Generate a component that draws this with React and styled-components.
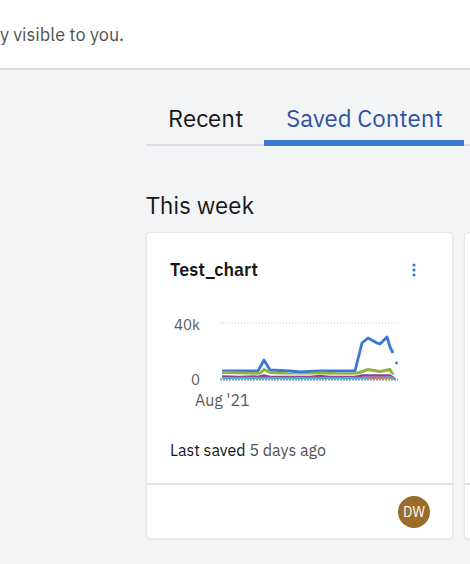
import React from "react";
import styled, { createGlobalStyle } from "styled-components";

const GlobalStyle = createGlobalStyle`
    html, body {
        margin: 0;
        padding: 0;
        background: #f3f4f6;
        font-family: "IBM Plex Sans", Roboto, "Liberation Sans", sans-serif;
        color: #161616;
    }
    * {
        box-sizing: border-box;
    }
`;

const SERIES = [
    { color: "#3b76d9", width: 2.8, points: "2,53 20,53 38,53 44,42 50,52 70,53 80,54 100,53 120,53 135,53 142,25 148,20 157,25 160,26 167,19 170,29 173,35" },
    { color: "#8fb33c", width: 3, points: "2,54.5 40,55.5 44,51.5 50,54.5 80,57 100,55 120,56 135,56 148,51.5 160,53.5 170,51.5 173,57" },
    { color: "#ffffff", width: 1.5, points: "2,57 40,57.5 44,56 50,57 135,57.5 148,56 170,56 174,58.5" },
    { color: "#8e3d9c", width: 2.5, points: "2,58.5 20,59 40,58.5 44,57.5 50,59 90,59 100,58 110,59 135,59 142,57.5 170,57.5 175,61" },
    { color: "#3fb8c9", width: 2, points: "2,60 140,60 160,60 170,59 175,61" },
];

export default function App() {
    return (
        <>
            <GlobalStyle />
            <TopBar>
                <Notice>
                    <NoticeText>Content you save is only visible to you.</NoticeText>
                </Notice>
            </TopBar>

            <Main>
                <TabList>
                    <Tab>Recent</Tab>
                    <Tab active>Saved Content</Tab>
                </TabList>

                <SectionTitle>This week</SectionTitle>

                <CardRow>
                    <Card>
                        <CardBody>
                            <TitleRow>
                                <CardTitle>Test_chart</CardTitle>
                                <MenuButton aria-label="More options">
                                    <svg width="4" height="14" viewBox="0 0 4 14">
                                        <circle cx="2" cy="2" r="1.6" fill="#3b76d9" />
                                        <circle cx="2" cy="7" r="1.6" fill="#3b76d9" />
                                        <circle cx="2" cy="12" r="1.6" fill="#3b76d9" />
                                    </svg>
                                </MenuButton>
                            </TitleRow>

                            <ChartGrid>
                                <YAxis>
                                    <AxisLabel>40k</AxisLabel>
                                    <AxisLabel>0</AxisLabel>
                                </YAxis>
                                <svg width="180" height="72" viewBox="0 0 180 72">
                                    <line x1="0" y1="5" x2="178" y2="5" stroke="#c8c9cc" strokeWidth="1" strokeDasharray="1 2" />
                                    <line x1="0" y1="61.5" x2="178" y2="61.5" stroke="#8b8fd6" strokeWidth="2" strokeDasharray="2 1" />
                                    {SERIES.map((s, i) => (
                                        <polyline
                                            key={i}
                                            points={s.points}
                                            fill="none"
                                            stroke={s.color}
                                            strokeWidth={s.width}
                                            strokeLinejoin="round"
                                        />
                                    ))}
                                    <circle cx="176.5" cy="45" r="1.4" fill="#3b76d9" />
                                    <line x1="2" y1="59" x2="176" y2="59" stroke="#c44f8a" strokeWidth="1" strokeDasharray="2 4" />
                                    <line x1="150" y1="60" x2="172" y2="60" stroke="#e07b2c" strokeWidth="1.5" />
                                </svg>
                            </ChartGrid>
                            <XLabel>Aug '21</XLabel>

                            <SavedLine>
                                Last saved <Muted>5 days ago</Muted>
                            </SavedLine>
                        </CardBody>
                        <CardFooter>
                            <Avatar>DW</Avatar>
                        </CardFooter>
                    </Card>

                    <Card aria-hidden="true">
                        <CardBody />
                        <CardFooter />
                    </Card>
                </CardRow>
            </Main>
        </>
    );
}

const TopBar = styled.header`
    height: 70px;
    background: #fff;
    border-bottom: 2px solid #dcdde0;
    display: flex;
    align-items: center;
    overflow: hidden;
`;

const Notice = styled.div`
    width: 124px;
    display: flex;
    justify-content: flex-end;
    overflow: hidden;
    padding-top: 2px;
`;

const NoticeText = styled.p`
    margin: 0;
    white-space: nowrap;
    font-size: 18px;
    line-height: 24px;
    color: #525252;
`;

const Main = styled.main`
    padding-left: 146px;
    overflow: hidden;
`;

const TabList = styled.div`
    display: flex;
    margin-top: 20px;
    border-bottom: 2px solid #dcdde0;
`;

const Tab = styled.button`
    font-family: inherit;
    font-size: 24px;
    line-height: 28px;
    background: none;
    border: none;
    border-bottom: 6px solid ${(p) => (p.active ? "#3b76d9" : "transparent")};
    margin-bottom: -2px;
    padding: 14px 21px 8px 22px;
    color: ${(p) => (p.active ? "#2f52a0" : "#161616")};
    cursor: pointer;
`;

const SectionTitle = styled.h2`
    margin: 43px 0 12px;
    font-size: 24px;
    line-height: 32px;
    font-weight: 400;
    color: #161616;
`;

const CardRow = styled.div`
    display: flex;
    gap: 13px;
    padding-left: 1px;
    padding-bottom: 30px;
`;

const Card = styled.article`
    flex: 0 0 305px;
    height: 305px;
    background: #fff;
    border-radius: 3px;
    box-shadow: 0 0 0 1px #e6e6e9, 0 1px 3px rgba(0, 0, 0, 0.12);
    display: flex;
    flex-direction: column;
`;

const CardBody = styled.div`
    flex: 1;
    padding: 21px 22px 0 23px;
`;

const TitleRow = styled.div`
    display: flex;
    justify-content: space-between;
    align-items: center;
    height: 32px;
`;

const CardTitle = styled.h3`
    margin: 0;
    font-size: 18px;
    line-height: 20px;
    font-weight: 600;
    white-space: nowrap;
`;

const MenuButton = styled.button`
    width: 32px;
    height: 32px;
    border: none;
    background: none;
    display: flex;
    align-items: center;
    justify-content: center;
    padding: 0;
    cursor: pointer;
`;

const ChartGrid = styled.div`
    display: grid;
    grid-template-columns: 30px 180px;
    column-gap: 20px;
    margin-top: 32px;
`;

const YAxis = styled.div`
    height: 72px;
    display: flex;
    flex-direction: column;
    justify-content: space-between;
    align-items: flex-end;
    padding-bottom: 3px;
`;

const AxisLabel = styled.span`
    font-size: 15px;
    line-height: 14px;
    color: #5a5a5a;
`;

const XLabel = styled.div`
    margin-top: 2px;
    padding-left: 25px;
    font-size: 16px;
    line-height: 16px;
    color: #5a5a5a;
`;

const SavedLine = styled.p`
    margin: 32px 0 0;
    font-size: 16px;
    line-height: 20px;
    color: #161616;
`;

const Muted = styled.span`
    color: #525252;
`;

const CardFooter = styled.footer`
    height: 55px;
    border-top: 2px solid #e4e4e7;
    display: flex;
    justify-content: flex-end;
    align-items: center;
    padding: 0 22px;
`;

const Avatar = styled.div`
    width: 32px;
    height: 32px;
    border-radius: 50%;
    background: #9b6c2a;
    color: #fff;
    font-size: 14px;
    display: flex;
    align-items: center;
    justify-content: center;
`;
